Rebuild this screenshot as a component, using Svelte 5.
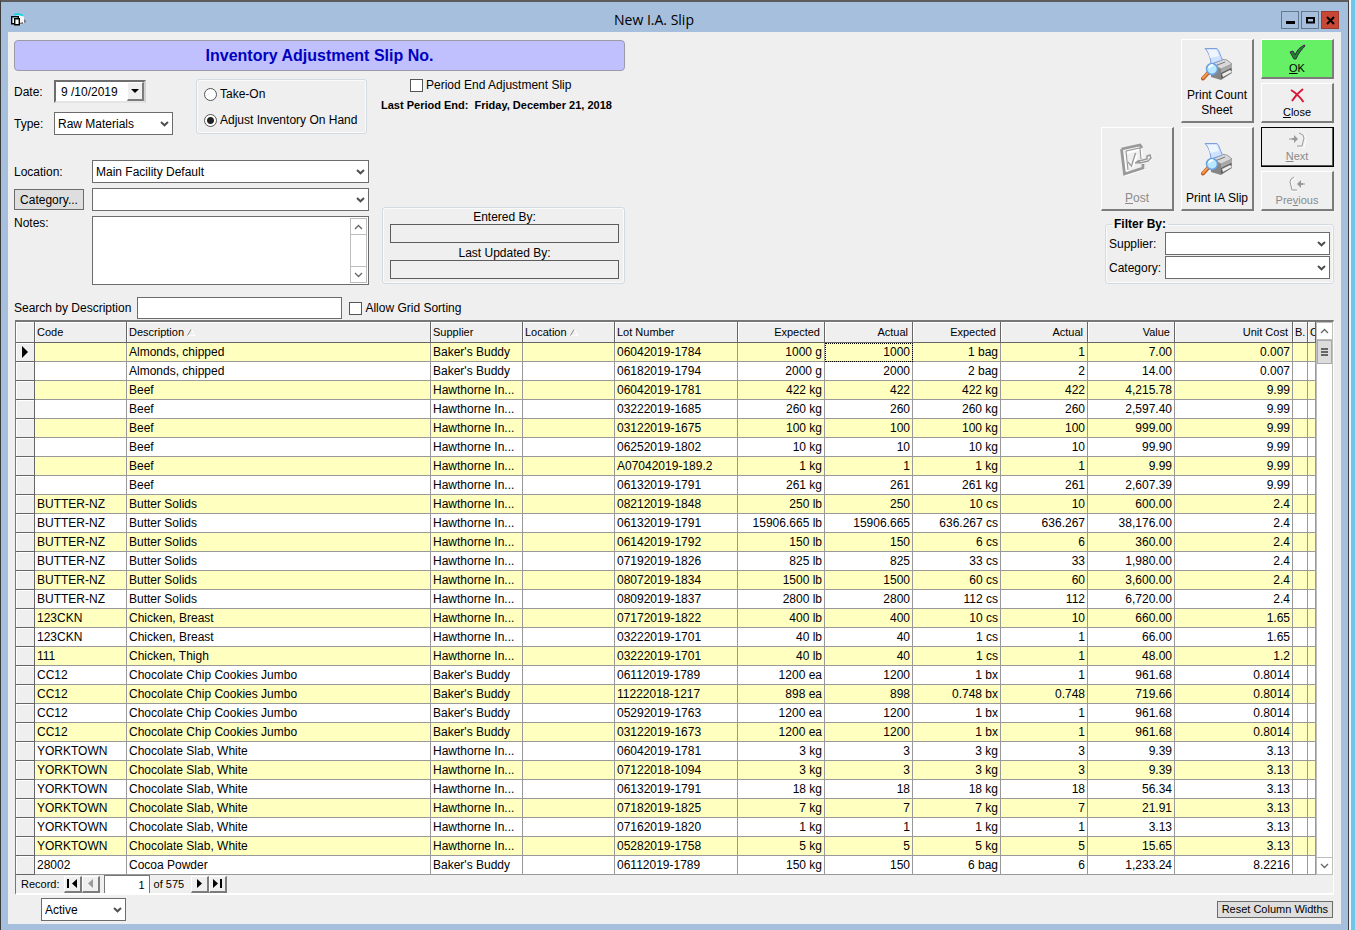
<script lang="ts">
	type Row = string[];

	const columns = [
		{ label: 'Code', cls: 'w-code' },
		{ label: 'Description', cls: '', sorted: true },
		{ label: 'Supplier', cls: 'w-code' },
		{ label: 'Location', cls: 'w-code', sorted: true },
		{ label: 'Lot Number', cls: 'w-lot' },
		{ label: 'Expected', cls: 'w-qty', num: true },
		{ label: 'Actual', cls: 'w-qty-wide', num: true },
		{ label: 'Expected', cls: 'w-qty-wide', num: true },
		{ label: 'Actual', cls: 'w-qty', num: true },
		{ label: 'Value', cls: 'w-qty', num: true },
		{ label: 'Unit Cost', cls: 'w-cost', num: true },
		{ label: 'B.', cls: 'w-b' },
		{ label: 'C', cls: 'w-c' }
	];

	const BB = "Baker's Buddy";
	const HI = 'Hawthorne In...';

	const rows: Row[] = [
		['', 'Almonds, chipped', BB, '', '06042019-1784', '1000 g', '1000', '1 bag', '1', '7.00', '0.007'],
		['', 'Almonds, chipped', BB, '', '06182019-1794', '2000 g', '2000', '2 bag', '2', '14.00', '0.007'],
		['', 'Beef', HI, '', '06042019-1781', '422 kg', '422', '422 kg', '422', '4,215.78', '9.99'],
		['', 'Beef', HI, '', '03222019-1685', '260 kg', '260', '260 kg', '260', '2,597.40', '9.99'],
		['', 'Beef', HI, '', '03122019-1675', '100 kg', '100', '100 kg', '100', '999.00', '9.99'],
		['', 'Beef', HI, '', '06252019-1802', '10 kg', '10', '10 kg', '10', '99.90', '9.99'],
		['', 'Beef', HI, '', 'A07042019-189.2', '1 kg', '1', '1 kg', '1', '9.99', '9.99'],
		['', 'Beef', HI, '', '06132019-1791', '261 kg', '261', '261 kg', '261', '2,607.39', '9.99'],
		['BUTTER-NZ', 'Butter Solids', HI, '', '08212019-1848', '250 lb', '250', '10 cs', '10', '600.00', '2.4'],
		['BUTTER-NZ', 'Butter Solids', HI, '', '06132019-1791', '15906.665 lb', '15906.665', '636.267 cs', '636.267', '38,176.00', '2.4'],
		['BUTTER-NZ', 'Butter Solids', HI, '', '06142019-1792', '150 lb', '150', '6 cs', '6', '360.00', '2.4'],
		['BUTTER-NZ', 'Butter Solids', HI, '', '07192019-1826', '825 lb', '825', '33 cs', '33', '1,980.00', '2.4'],
		['BUTTER-NZ', 'Butter Solids', HI, '', '08072019-1834', '1500 lb', '1500', '60 cs', '60', '3,600.00', '2.4'],
		['BUTTER-NZ', 'Butter Solids', HI, '', '08092019-1837', '2800 lb', '2800', '112 cs', '112', '6,720.00', '2.4'],
		['123CKN', 'Chicken, Breast', HI, '', '07172019-1822', '400 lb', '400', '10 cs', '10', '660.00', '1.65'],
		['123CKN', 'Chicken, Breast', HI, '', '03222019-1701', '40 lb', '40', '1 cs', '1', '66.00', '1.65'],
		['111', 'Chicken, Thigh', HI, '', '03222019-1701', '40 lb', '40', '1 cs', '1', '48.00', '1.2'],
		['CC12', 'Chocolate Chip Cookies Jumbo', BB, '', '06112019-1789', '1200 ea', '1200', '1 bx', '1', '961.68', '0.8014'],
		['CC12', 'Chocolate Chip Cookies Jumbo', BB, '', '11222018-1217', '898 ea', '898', '0.748 bx', '0.748', '719.66', '0.8014'],
		['CC12', 'Chocolate Chip Cookies Jumbo', BB, '', '05292019-1763', '1200 ea', '1200', '1 bx', '1', '961.68', '0.8014'],
		['CC12', 'Chocolate Chip Cookies Jumbo', BB, '', '03122019-1673', '1200 ea', '1200', '1 bx', '1', '961.68', '0.8014'],
		['YORKTOWN', 'Chocolate Slab, White', HI, '', '06042019-1781', '3 kg', '3', '3 kg', '3', '9.39', '3.13'],
		['YORKTOWN', 'Chocolate Slab, White', HI, '', '07122018-1094', '3 kg', '3', '3 kg', '3', '9.39', '3.13'],
		['YORKTOWN', 'Chocolate Slab, White', HI, '', '06132019-1791', '18 kg', '18', '18 kg', '18', '56.34', '3.13'],
		['YORKTOWN', 'Chocolate Slab, White', HI, '', '07182019-1825', '7 kg', '7', '7 kg', '7', '21.91', '3.13'],
		['YORKTOWN', 'Chocolate Slab, White', HI, '', '07162019-1820', '1 kg', '1', '1 kg', '1', '3.13', '3.13'],
		['YORKTOWN', 'Chocolate Slab, White', HI, '', '05282019-1758', '5 kg', '5', '5 kg', '5', '15.65', '3.13'],
		['28002', 'Cocoa Powder', BB, '', '06112019-1789', '150 kg', '150', '6 bag', '6', '1,233.24', '8.2216']
	];

	let mode = $state('adjust');
	let current = $state(0);
	let record = $state('1');
</script>

{#snippet combo(id: string, options: string[])}
	<span class="combo">
		<select {id}>
			{#each options as option}
				<option>{option}</option>
			{/each}
		</select>
		<svg width="9" height="6" viewBox="0 0 9 6" aria-hidden="true">
			<path d="M1 1l3.5 3.3L8 1" fill="none" stroke="#505050" stroke-width="2" />
		</svg>
	</span>
{/snippet}

{#snippet arrow(down: boolean)}
	<svg width="9" height="6" viewBox="0 0 9 6" aria-hidden="true">
		<path d={down ? 'M1 1l3.5 3.5L8 1' : 'M1 5l3.5-3.5L8 5'} fill="none" stroke="#666" stroke-width="1.3" />
	</svg>
{/snippet}

{#snippet printer()}
	<svg width="32" height="33" viewBox="0 0 32 33" aria-hidden="true">
		<path d="M10 15l8-4 8 1 5 4v9l-11 7-10-3z" fill="#858585" />
		<path d="M10 15l9-4 7 1 5 4-11 5z" fill="#d8d8d8" stroke="#8a8a8a" stroke-width=".7" />
		<path d="M20 21l11-5v4l-11 6z" fill="#a9a9a9" />
		<path d="M20 25l10-5v5l-10 6z" fill="#606060" />
		<path d="M21 26l8-4 2 2-9 5z" fill="#ededed" />
		<path d="M11 16l9-4M14 18l10-4" stroke="#777" />
		<path d="M4 .5h12c2.500 2 3 7 5.500 11.500L10 16C9.500 9 7.500 4 4 .5z" fill="#cfe2ff" stroke="#7f9ed8" />
		<path d="M6.500 2H15c1.500 2 2.200 4 3 6l-9 2c-.5-3-1.500-5.500-2.500-8z" fill="#eef5ff" />
		<path d="M7 25l-5 5.500" stroke="#b85a20" stroke-width="4" stroke-linecap="round" />
		<path d="M7 24.500l-5 5.500" stroke="#f79a4c" stroke-width="2" stroke-linecap="round" />
		<circle cx="11" cy="21" r="5.500" fill="#b8e8ff" stroke="#6a9ee0" stroke-width="1.500" />
		<path d="M8 20c.5-2 2-3 4-2.500" stroke="#fff" stroke-width="2" fill="none" />
	</svg>
{/snippet}

<div class="window">
	<header class="titlebar">
		<svg class="app-icon" width="16" height="14" viewBox="0 0 16 14" aria-hidden="true">
			<path d="M4 3l7-1 2 2v6l-5 2H5z" fill="#f4f4f4" />
			<path d="M3 1.500l4-.5 5 1.500" fill="none" stroke="#00d8e8" stroke-width="1.500" />
			<path d="M13 6l2.500 2.500L13 10z" fill="#777" />
			<path d="M9 10l3-1v2H9z" fill="#777" />
			<path d="M.7 3.700h6.600v7H.7z" fill="#fff" stroke="#000" stroke-width="1.400" />
			<path d="M1.500 5h5" stroke="#00d8e8" />
			<path d="M3.700 5.700h4.600v6H3.700z" fill="#fff" stroke="#000" stroke-width="1.400" />
		</svg>
		<h1>New I.A. Slip</h1>
		<div class="window-buttons">
			<button aria-label="Minimize">
				<svg width="9" height="9" viewBox="0 0 9 9"><path d="M0 5h9v3H0z" /></svg>
			</button>
			<button aria-label="Maximize">
				<svg width="9" height="9" viewBox="0 0 9 9"><path d="M1 2h7v4.500H1z" fill="none" stroke="#000" stroke-width="2" /></svg>
			</button>
			<button class="close" aria-label="Close window">
				<svg width="9" height="9" viewBox="0 0 9 9"><path d="M1 1l7 7M8 1L1 8" stroke="#000" stroke-width="2" /></svg>
			</button>
		</div>
	</header>

	<main class="client">
		<div class="top">
			<div class="details">
				<h2 class="banner">Inventory Adjustment Slip No.</h2>

				<div class="general">
					<div class="date-type">
						<label for="date">Date:</label>
						<div class="date-box">
							<input id="date" value="9 /10/2019" />
							<button class="bevel" aria-label="Open calendar">
								<svg width="8" height="4" viewBox="0 0 8 4"><path d="M0 0h8L4 4z" /></svg>
							</button>
						</div>
						<label for="type">Type:</label>
						{@render combo('type', ['Raw Materials'])}
					</div>

					<div class="frame modes">
						<label><input type="radio" name="mode" value="takeon" bind:group={mode} /> Take-On</label>
						<label><input type="radio" name="mode" value="adjust" bind:group={mode} /> Adjust Inventory On Hand</label>
					</div>

					<div class="period">
						<label><input type="checkbox" /> Period End Adjustment Slip</label>
						<strong>Last Period End:&nbsp; Friday, December 21, 2018</strong>
					</div>
				</div>

				<div class="where">
					<div class="where-form">
						<label for="location">Location:</label>
						{@render combo('location', ['Main Facility Default'])}
						<button class="flat">Category...</button>
						{@render combo('category', [''])}
						<label class="notes-label" for="notes">Notes:</label>
						<div class="notes-box">
							<textarea id="notes"></textarea>
							<div class="scroll">
								<button aria-label="Scroll notes up">{@render arrow(false)}</button>
								<span class="track"></span>
								<button aria-label="Scroll notes down">{@render arrow(true)}</button>
							</div>
						</div>
					</div>

					<div class="frame audit">
						<label for="entered">Entered By:</label>
						<input id="entered" readonly />
						<label for="updated">Last Updated By:</label>
						<input id="updated" readonly />
					</div>
				</div>
			</div>

			<div class="side">
				<div class="actions">
					<button class="bevel tall count">
						{@render printer()}
						<span>Print Count Sheet</span>
					</button>
					<button class="bevel small ok">
						<svg width="17" height="16" viewBox="0 0 17 16" aria-hidden="true">
							<path d="M1 8l3-1 2 4C8 6 11 3 15.500 1l.5 1C12 6 9 10 7 15H5z" fill="#158a28" stroke="#42224f" />
						</svg>
						<span><u>O</u>K</span>
					</button>
					<button class="bevel small">
						<svg width="15" height="15" viewBox="0 0 15 15" aria-hidden="true">
							<path d="M1 2c5 3 9 7 12.500 12M13 1C9 4 5 8 2 13" fill="none" stroke="#d81838" stroke-width="2" />
						</svg>
						<span><u>C</u>lose</span>
					</button>
					<button class="bevel tall post" disabled>
						<svg width="34" height="36" viewBox="0 0 34 36" aria-hidden="true">
							<g fill="none" stroke="#fff" stroke-width="2" transform="translate(1 1)">
								<path d="M2 7l3 24 18-6v-4M7 29L5 9l15-4 1 9M8 18l4 4 4-11M17 19l12-3 2-4" />
							</g>
							<g fill="none" stroke="#999">
								<path d="M1.500 6L20 2l2 3M1.500 6l3 25L23 25v-4" stroke-width="2.800" />
								<path d="M6 8l14-3 1 11M6 8l2 19" stroke-width="1.200" />
								<path d="M8 19l3.500 4 4-13" stroke-width="1.300" />
								<path d="M15 20l4-3 1 3z" fill="#999" />
								<path d="M19 18l8-2v-3l3-1 1 3-3 3-8 2z" stroke-width="1.500" />
							</g>
						</svg>
						<span><u>P</u>ost</span>
					</button>
					<button class="bevel tall">
						{@render printer()}
						<span>Print IA Slip</span>
					</button>
					<button class="bevel small next" disabled>
						<svg width="17" height="16" viewBox="0 0 17 16" aria-hidden="true">
							<path d="M11 1l4 2 1 3-2 9H9" fill="none" stroke="#fff" transform="translate(1 1)" />
							<path d="M10 1l4 2 1 3-2 8H8M0 7h3" fill="none" stroke="#999" />
							<path d="M3 6h2V3l4 4-4 4V8H3z" fill="#999" />
						</svg>
						<span><u>N</u>ext</span>
					</button>
					<button class="bevel small" disabled>
						<svg width="17" height="16" viewBox="0 0 17 16" aria-hidden="true">
							<path d="M6 1L2 3 1 6l2 9h5" fill="none" stroke="#fff" transform="translate(1 1)" />
							<path d="M5 1L2 3 1 6l2 8h5M13 8h3" fill="none" stroke="#999" />
							<path d="M14 7h-2V4L8 8l4 4V9h2z" fill="#999" />
						</svg>
						<span>Pre<u>v</u>ious</span>
					</button>
				</div>

				<fieldset class="filter">
					<legend>Filter By:</legend>
					<label for="f-supplier">Supplier:</label>
					{@render combo('f-supplier', [''])}
					<label for="f-category">Category:</label>
					{@render combo('f-category', [''])}
				</fieldset>
			</div>
		</div>

		<div class="search">
			<label for="search">Search by Description</label>
			<input id="search" />
			<label class="sorting"><input type="checkbox" /> Allow Grid Sorting</label>
		</div>

		<section class="grid">
			<div class="grid-body">
				<table>
					<thead>
						<tr>
							<th class="selector"></th>
							{#each columns as col}
								<th class={col.cls} class:num={col.num}>
									{col.label}
									{#if col.sorted}
										<svg width="9" height="7" viewBox="0 0 9 7" aria-hidden="true">
											<path d="M4.500 .5L8 6.500H.5" fill="none" stroke="#fff" />
											<path d="M.5 6.500l3.500-6" stroke="#888" />
										</svg>
									{/if}
								</th>
							{/each}
						</tr>
					</thead>
					<tbody>
						{#each rows as row, i}
							<tr onclick={() => (current = i)}>
								<th class="selector">
									{#if i === current}
										<svg width="6" height="12" viewBox="0 0 6 12" aria-hidden="true"><path d="M0 0l6 6-6 6z" /></svg>
									{/if}
								</th>
								{#each columns as col, c}
									<td class:num={col.num} class:focused={i === current && c === 6}>{row[c] ?? ''}</td>
								{/each}
							</tr>
						{/each}
					</tbody>
				</table>
				<div class="scroll wide">
					<button aria-label="Scroll up">{@render arrow(false)}</button>
					<span class="thumb"></span>
					<span class="track"></span>
					<button aria-label="Scroll down">{@render arrow(true)}</button>
				</div>
			</div>

			<div class="navigator">
				<label for="record">Record:</label>
				<div class="nav-buttons">
					<button class="bevel" aria-label="First record">
						<svg width="11" height="9" viewBox="0 0 11 9"><path d="M0 0h2v9H0zM10 0v9L5 4.500z" /></svg>
					</button>
					<button class="bevel" aria-label="Previous record" disabled>
						<svg width="11" height="9" viewBox="0 0 11 9"><path d="M8 0v9L3 4.500z" fill="#999" /></svg>
					</button>
				</div>
				<input id="record" bind:value={record} />
				<span>of 575</span>
				<div class="nav-buttons">
					<button class="bevel" aria-label="Next record">
						<svg width="11" height="9" viewBox="0 0 11 9"><path d="M3 0v9l5-4.500z" /></svg>
					</button>
					<button class="bevel" aria-label="Last record">
						<svg width="11" height="9" viewBox="0 0 11 9"><path d="M1 0v9l5-4.500zM8 0h2v9H8z" /></svg>
					</button>
				</div>
			</div>
		</section>

		<footer>
			<label class="status" aria-label="Status">{@render combo('status', ['Active'])}</label>
			<button class="flat reset">Reset Column Widths</button>
		</footer>
	</main>
</div>

<style>
	:global(body) {
		background: #6cc8ea;
		font: 12px/14px 'Liberation Sans', Arial, sans-serif;
		color: #000;
	}

	* {
		box-sizing: border-box;
	}

	button,
	input,
	select,
	textarea {
		font: inherit;
		color: inherit;
		margin: 0;
		border-radius: 0;
	}

	svg {
		display: block;
		flex: none;
	}

	.window {
		min-height: 100vh;
		margin-right: 6px;
		display: flex;
		flex-direction: column;
		padding: 0 7px 6px;
		background: #a6bfdc;
		border: solid #3c3c3c;
		border-width: 2px 1px 0;
		border-top-color: #5c5c5c;
		box-shadow: 2px 0 #e8f4fa;
	}

	.titlebar {
		height: 30px;
		display: grid;
		grid-template-columns: auto 1fr auto;
		align-items: center;
		padding: 6px 2px 0 3px;
	}

	h1 {
		margin: 0;
		font: 14px/18px 'Open Sans', 'Noto Sans', sans-serif;
		text-align: center;
	}

	.window-buttons {
		display: flex;
		justify-content: flex-end;
		gap: 2px;
	}

	.window-buttons button {
		width: 18px;
		height: 18px;
		padding: 0;
		display: grid;
		place-items: center;
		background: #a6bfdc;
		border: 1px solid #64788f;
	}

	.window-buttons .close {
		background: #c84835;
		border-color: #9c3a2e;
	}

	.client {
		flex: 1;
		padding: 7px 6px 0;
		background: #efefef;
	}

	.top {
		display: flex;
		justify-content: space-between;
	}

	.details {
		width: 611px;
		padding-top: 1px;
	}

	.banner {
		margin: 0;
		font-size: 16px;
		line-height: 29px;
		text-align: center;
		color: #0000c0;
		background: #c0c0ff;
		border: 1px solid #9a9aa8;
		border-radius: 4px;
	}

	.general {
		display: flex;
		align-items: flex-start;
		padding-top: 7px;
		height: 89px;
	}

	.date-type {
		padding-top: 2px;
		display: grid;
		grid-template-columns: 40px 119px;
		align-items: center;
		row-gap: 9px;
	}

	.date-box {
		width: 92px;
		height: 23px;
		display: flex;
		background: #fff;
		border: 2px solid #6e6e6e;
		border-right-color: #d0d0d0;
		border-bottom-color: #e4e4e4;
	}

	.date-box input {
		flex: 1;
		min-width: 0;
		padding: 0 5px;
		border: 0;
		background: none;
	}

	.date-box button {
		width: 17px;
	}

	.combo {
		display: grid;
		align-items: center;
	}

	.combo > * {
		grid-area: 1 / 1;
	}

	.combo svg {
		justify-self: end;
		margin-right: 4px;
		pointer-events: none;
	}

	select {
		appearance: none;
		width: 100%;
		height: 23px;
		padding: 0 16px 0 3px;
		background: #fff;
		border: 1px solid #6c6c6c;
	}

	.frame,
	.filter {
		border: 1px solid #d2dbe2;
		border-radius: 3px;
		box-shadow: inset 0 0 0 1px #fafafa;
	}

	.modes {
		width: 171px;
		height: 55px;
		margin: 1px 0 0 23px;
		padding: 7px;
		display: flex;
		flex-direction: column;
		gap: 12px;
	}

	.modes label,
	.period label,
	.sorting {
		display: flex;
		align-items: center;
		gap: 3px;
		white-space: nowrap;
	}

	input[type='radio'],
	input[type='checkbox'] {
		appearance: none;
		width: 13px;
		height: 13px;
		background: #fff;
		border: 1px solid #555;
	}

	input[type='radio'] {
		border-radius: 50%;
	}

	input[type='radio']:checked {
		background: radial-gradient(circle, #222 0 3px, #fff 4px);
	}

	input[type='checkbox']:checked {
		background: #444;
		box-shadow: inset 0 0 0 2px #fff;
	}

	.period {
		margin-left: 14px;
	}

	.period label {
		padding-left: 29px;
	}

	.period strong {
		display: block;
		margin-top: 6px;
		font-size: 11px;
	}

	.where {
		display: flex;
		justify-content: space-between;
	}

	.where-form {
		width: 355px;
		display: grid;
		grid-template-columns: 70px 277px;
		column-gap: 8px;
		row-gap: 5px;
		align-items: center;
	}

	.notes-label {
		align-self: start;
	}

	.flat {
		height: 21px;
		padding: 0 4px;
		background: #dedede;
		border: 1px solid #6c6c6c;
	}

	.notes-box {
		height: 69px;
		display: flex;
		padding: 1px;
		background: #fff;
		border: 1px solid #6c6c6c;
	}

	textarea {
		flex: 1;
		min-width: 0;
		resize: none;
		padding: 2px;
		border: 0;
		background: none;
	}

	.scroll {
		width: 17px;
		display: flex;
		flex-direction: column;
		background: #fff;
		border: 1px solid #bdbdbd;
	}

	.scroll button {
		height: 16px;
		padding: 0;
		display: grid;
		place-items: center;
		background: #fff;
		border: solid #bdbdbd;
		border-width: 0 0 1px;
	}

	.scroll button:last-child {
		border-width: 1px 0 0;
	}

	.track {
		flex: 1;
	}

	.thumb {
		height: 24px;
		border: 1px solid #aaa;
		background:
			linear-gradient(#666 0 2px, transparent 2px 3px, #666 3px 5px, transparent 5px 6px, #666 6px 8px) center / 7px 8px no-repeat,
			#dcdcdc;
	}

	.audit {
		width: 243px;
		height: 77px;
		margin-top: 47px;
		padding: 2px 5px 4px 7px;
		display: flex;
		flex-direction: column;
		text-align: center;
	}

	.audit input {
		flex: none;
		height: 19px;
		background: #efefef;
		border: 1px solid #5c5c5c;
	}

	.audit input + label {
		margin-top: 3px;
	}

	.actions {
		display: grid;
		grid-template-columns: repeat(3, 73px);
		grid-auto-rows: 40px;
		grid-auto-flow: dense;
		gap: 4px 7px;
	}

	.bevel {
		padding: 0;
		display: flex;
		align-items: center;
		justify-content: center;
		background: #efefef;
		border: solid;
		border-width: 1px 2px 2px 1px;
		border-color: #fff #7c7c7c #7c7c7c #fff;
	}

	.bevel:disabled {
		color: #8a8a8a;
	}

	.tall {
		grid-column: 2;
		grid-row: span 2;
		flex-direction: column;
		justify-content: space-between;
		padding: 15px 0 3px;
	}

	.count {
		padding-top: 8px;
	}

	.post {
		grid-column: 1;
		grid-row: 3 / span 2;
	}

	.tall span {
		line-height: 15px;
	}

	.small {
		grid-column: 3;
		flex-direction: column;
		justify-content: space-between;
		padding: 4px 0 2px;
		font-size: 11px;
		line-height: 13px;
	}

	.ok {
		background: #66f066;
	}

	.next {
		outline: 1px solid #000;
		outline-offset: -1px;
		border-color: #000 #555 #555 #000;
	}

	.filter {
		width: 229px;
		margin: 6px 0 0 auto;
		padding: 1px 3px 4px;
		display: grid;
		grid-template-columns: 56px 1fr;
		align-items: center;
		row-gap: 1px;
	}

	legend {
		padding: 0 2px;
		margin-left: 3px;
		font-weight: bold;
	}

	.side {
		padding-right: 1px;
	}

	.search {
		display: flex;
		align-items: center;
		padding: 12px 0 1px;
	}

	.search > input {
		width: 205px;
		height: 22px;
		margin: 0 7px 0 6px;
		border: 1px solid #6c6c6c;
	}

	.grid {
		margin: 0 1px;
		border: solid;
		border-width: 2px 1px 2px;
		border-color: #777 #fff #fff #777;
	}

	.grid-body {
		display: flex;
	}

	table {
		flex: 1;
		width: 0;
		table-layout: fixed;
		border-collapse: separate;
		border-spacing: 0;
	}

	th,
	td {
		height: 19px;
		padding: 0 2px;
		overflow: hidden;
		white-space: nowrap;
		text-align: left;
		line-height: 14px;
		border: solid #999;
		border-width: 0 1px 1px 0;
	}

	th {
		background: #efefef;
		font-weight: normal;
		border-color: #666;
		box-shadow: inset 1px 1px #fff;
	}

	thead th {
		height: 21px;
		font-size: 11px;
	}

	thead .num {
		padding-right: 4px;
	}

	thead svg {
		display: inline;
	}

	tbody tr {
		background: #fff;
	}

	tbody tr:nth-child(odd) {
		background: #ffffc0;
	}

	.num {
		text-align: right;
	}

	.selector {
		width: 19px;
		padding: 0 6px;
	}

	.w-code {
		width: 92px;
	}

	.w-lot {
		width: 123px;
	}

	.w-qty {
		width: 87px;
	}

	.w-qty-wide {
		width: 88px;
	}

	.w-cost {
		width: 118px;
	}

	.w-b {
		width: 15px;
	}

	.w-c {
		width: 8px;
		text-overflow: clip;
	}

	.focused {
		outline: 1px dotted #000;
		outline-offset: -1px;
	}

	.wide button {
		height: 17px;
	}

	.navigator {
		height: 18px;
		display: flex;
		align-items: center;
		padding-left: 5px;
		font-size: 11px;
	}

	.nav-buttons {
		display: flex;
	}

	.nav-buttons button {
		width: 18px;
		height: 17px;
	}

	.navigator label {
		margin-right: 4px;
	}

	.navigator input {
		width: 46px;
		height: 18px;
		margin: 0 4px;
		padding: 0 4px;
		text-align: right;
		border: 1px solid #777;
		border-bottom: 0;
	}

	.navigator span {
		margin-right: 7px;
	}

	footer {
		display: flex;
		align-items: center;
		justify-content: space-between;
		padding: 3px 2px 0 27px;
	}

	.status {
		width: 85px;
	}

	.reset {
		height: 17px;
		font-size: 11px;
		line-height: 13px;
	}
</style>
